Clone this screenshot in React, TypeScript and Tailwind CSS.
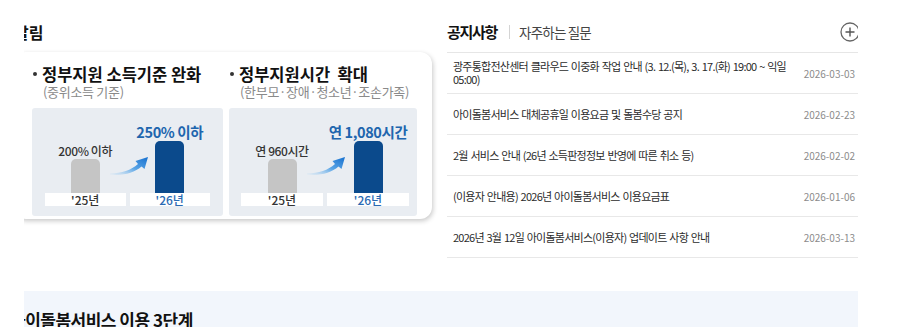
import React from 'react';

const NOTICES = [
  { title: '광주통합전산센터 클라우드 이중화 작업 안내 (3. 12.(목), 3. 17.(화) 19:00 ~ 익일 05:00)', date: '2026-03-03' },
  { title: '아이돌봄서비스 대체공휴일 이용요금 및 돌봄수당 공지', date: '2026-02-23' },
  { title: '2월 서비스 안내 (26년 소득판정정보 반영에 따른 취소 등)', date: '2026-02-02' },
  { title: '(이용자 안내용) 2026년 아이돌봄서비스 이용요금표', date: '2026-01-06' },
  { title: '2026년 3월 12일 아이돌봄서비스(이용자) 업데이트 사항 안내', date: '2026-03-13' },
];

function Swoosh({ id }: { id: string }) {
  return (
    <svg width="40" height="20" viewBox="0 0 40 20" className="absolute left-[78px] top-[48px]">
      <defs>
        <linearGradient id={id} x1="0" y1="1" x2="1" y2="0">
          <stop offset="0" stopColor="#bcdcf5" stopOpacity="0.2" />
          <stop offset="0.5" stopColor="#5aa5e6" />
          <stop offset="1" stopColor="#1670cf" />
        </linearGradient>
      </defs>
      <path d="M0 17.5 C12 17.5 21 14 28 8 L25.5 5 L38 1 L34.5 13 L31.5 10.5 C24 17 13 20 0 18.5 Z" fill={`url(#${id})`} />
    </svg>
  );
}

type PanelProps = {
  title: string;
  sub: string;
  before: string;
  after: string;
  width: string;
  pad: string;
  arrowId: string;
};

function Panel({ title, sub, before, after, width, pad, arrowId }: PanelProps) {
  return (
    <div className={width}>
      <div className="flex items-center h-[20px] pl-[1px]">
        <span className="w-[4px] h-[4px] bg-[#333] rounded-full mr-[5px]" />
        <span className="text-[16.5px] font-bold text-[#111] whitespace-pre leading-[20px]">{title}</span>
      </div>
      <p className="pl-[11px] text-[13px] leading-[16px] text-[#8a8a8a] whitespace-pre tracking-[-0.3px]">{sub}</p>
      <div className={`relative mt-[8px] h-[108px] bg-[#e9edf2] rounded-[3px] flex items-end gap-[4px] pb-[10px] ${pad}`}>
        <div className="flex-1 flex flex-col items-center">
          <span className="text-[12px] leading-[16px] font-medium text-[#333] tracking-[-0.4px]">{before}</span>
          <div className="w-[29px] h-[34px] bg-[#c5c5c5] rounded-t-[5px]" />
          <div className="w-full h-[13px] bg-white text-center text-[12px] leading-[13px] font-medium text-[#333]">'25년</div>
        </div>
        <div className="flex-1 flex flex-col items-center">
          <span className="text-[14.5px] leading-[18px] font-semibold text-[#2065ae] tracking-[-0.4px]">{after}</span>
          <div className="w-[29px] h-[52px] bg-[#0b4a8c] rounded-t-[5px]" />
          <div className="w-full h-[13px] bg-white text-center text-[12px] leading-[13px] font-medium text-[#2a6ab3]">'26년</div>
        </div>
        <Swoosh id={arrowId} />
      </div>
    </div>
  );
}

export default function App() {
  return (
    <div className="w-[900px] h-[327px] bg-white overflow-hidden font-['Noto_Sans_CJK_KR','Noto_Sans',sans-serif]">
      <div className="ml-[24px] w-[834px] overflow-hidden">
        <div className="flex">
          {/* 알림 */}
          <div className="w-[408px] -ml-[10px] shrink-0 pb-[8px]">
            <h2 className="mt-[20px] mb-[8px] h-[24px] flex items-center text-[16px] font-bold text-[#111]">알림</h2>
            <div className="w-[418px] bg-white rounded-[12px] shadow-[1px_2px_5px_rgba(0,0,0,0.22)] pt-[12px] pb-[3px] pl-[18px] pr-[15px] flex gap-[6px]">
              <Panel title="정부지원 소득기준 완화" sub="(중위소득 기준)" before="200% 이하" after="250% 이하"
                width="w-[191px]" pad="pl-[13px] pr-[13px]" arrowId="arr1" />
              <Panel title="정부지원시간  확대" sub="(한부모·장애·청소년·조손가족)" before="연 960시간" after="연 1,080시간"
                width="w-[188px]" pad="pl-[12px] pr-[8px]" arrowId="arr2" />
            </div>
          </div>

          {/* 공지사항 */}
          <div className="w-[411px] ml-auto shrink-0">
            <div className="mt-[20px] mb-[8px] h-[24px] flex items-center">
              <h2 className="text-[15px] font-bold text-[#111] tracking-[-1.3px]">공지사항</h2>
              <span className="w-px h-[14px] bg-[#d4d4d4] ml-[12px] mr-[9px]" />
              <span className="text-[13.5px] text-[#444] tracking-[-0.8px]">자주하는 질문</span>
              <svg width="20" height="20" viewBox="0 0 20 20" className="ml-auto -mr-[2px]">
                <circle cx="10" cy="10" r="9" fill="none" stroke="#666" strokeWidth="1.3" />
                <path d="M10 5.5 V14.5 M5.5 10 H14.5" stroke="#555" strokeWidth="1.4" />
              </svg>
            </div>
            <ul className="border-t border-[#e6e6e6]">
              {NOTICES.map(n => (
                <li key={n.date} className="h-[41px] flex items-center border-b border-[#e8e8e8] pl-[6px] pr-[3px]">
                  <p className="w-[340px] text-[11px] leading-[13px] text-[#2b2b2b] tracking-[-0.75px] [word-spacing:1px]">{n.title}</p>
                  <span className="ml-auto text-[10px] text-[#8c8c8c]">{n.date}</span>
                </li>
              ))}
            </ul>
          </div>
        </div>

        {/* 이용 3단계 */}
        <div className="mt-[33px] h-[40px] bg-[#f2f6fc] pt-[17px]">
          <h3 className="-ml-[14px] text-[17px] leading-[24px] font-bold text-[#111] tracking-[-0.5px]">아이돌봄서비스 이용 3단계</h3>
        </div>
      </div>
    </div>
  );
}
